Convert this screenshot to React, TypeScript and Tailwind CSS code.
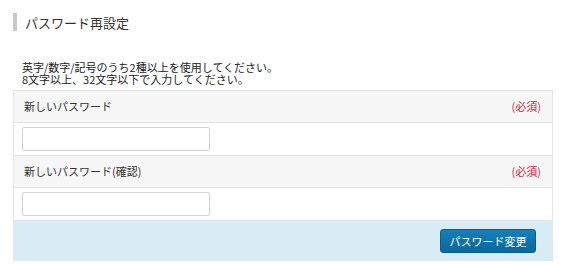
import React from 'react';

const fields = [
    { label: '新しいパスワード' },
    { label: '新しいパスワード(確認)' },
];

export default function App() {
    return (
        <div
            className="w-[567px] h-[264px] bg-white text-[#333] pt-[13px] pl-[13px]"
            style={{ fontFamily: '"Noto Sans CJK JP", "Noto Sans", sans-serif' }}
        >
            {/* Title */}
            <div className="flex items-center h-[18px]">
                <span className="w-[4px] h-[18px] bg-[#c8c8c8]" />
                <h1 className="ml-[8px] text-[13px] leading-none text-[#333]">パスワード再設定</h1>
            </div>

            {/* Note */}
            <p className="mt-[30px] ml-[9px] text-[11px] leading-[12px] text-[#222]">
                英字/数字/記号のうち2種以上を使用してください。
                <br />
                8文字以上、32文字以下で入力してください。
            </p>

            {/* Form table */}
            <div className="mt-[5px] w-[540px] border-l border-r border-t border-[#e3e3e3]">
                {fields.map((field, i) => (
                    <div key={i}>
                        <div className="h-[32px] flex items-center justify-between bg-[#f7f7f7] border-b border-[#e3e3e3] px-[10px]">
                            <span className="text-[11px] text-[#333]">{field.label}</span>
                            <span className="text-[11px] text-[#c8283c] mr-[1px]">(必須)</span>
                        </div>
                        <div className="h-[33px] flex items-center border-b border-[#e3e3e3] px-[8px]">
                            <input
                                type="password"
                                className="w-[188px] h-[24px] border border-[#d4d4d4] rounded-[2px] bg-white outline-none"
                            />
                        </div>
                    </div>
                ))}
                <div className="h-[40px] bg-[#d8ecf5] flex items-center justify-end pr-[16px]">
                    <button className="w-[96px] h-[24px] rounded-[3px] border border-[#0a5c8c] bg-gradient-to-b from-[#1680b8] to-[#0b679d] text-white text-[11px] leading-none">
                        パスワード変更
                    </button>
                </div>
            </div>
        </div>
    );
}
